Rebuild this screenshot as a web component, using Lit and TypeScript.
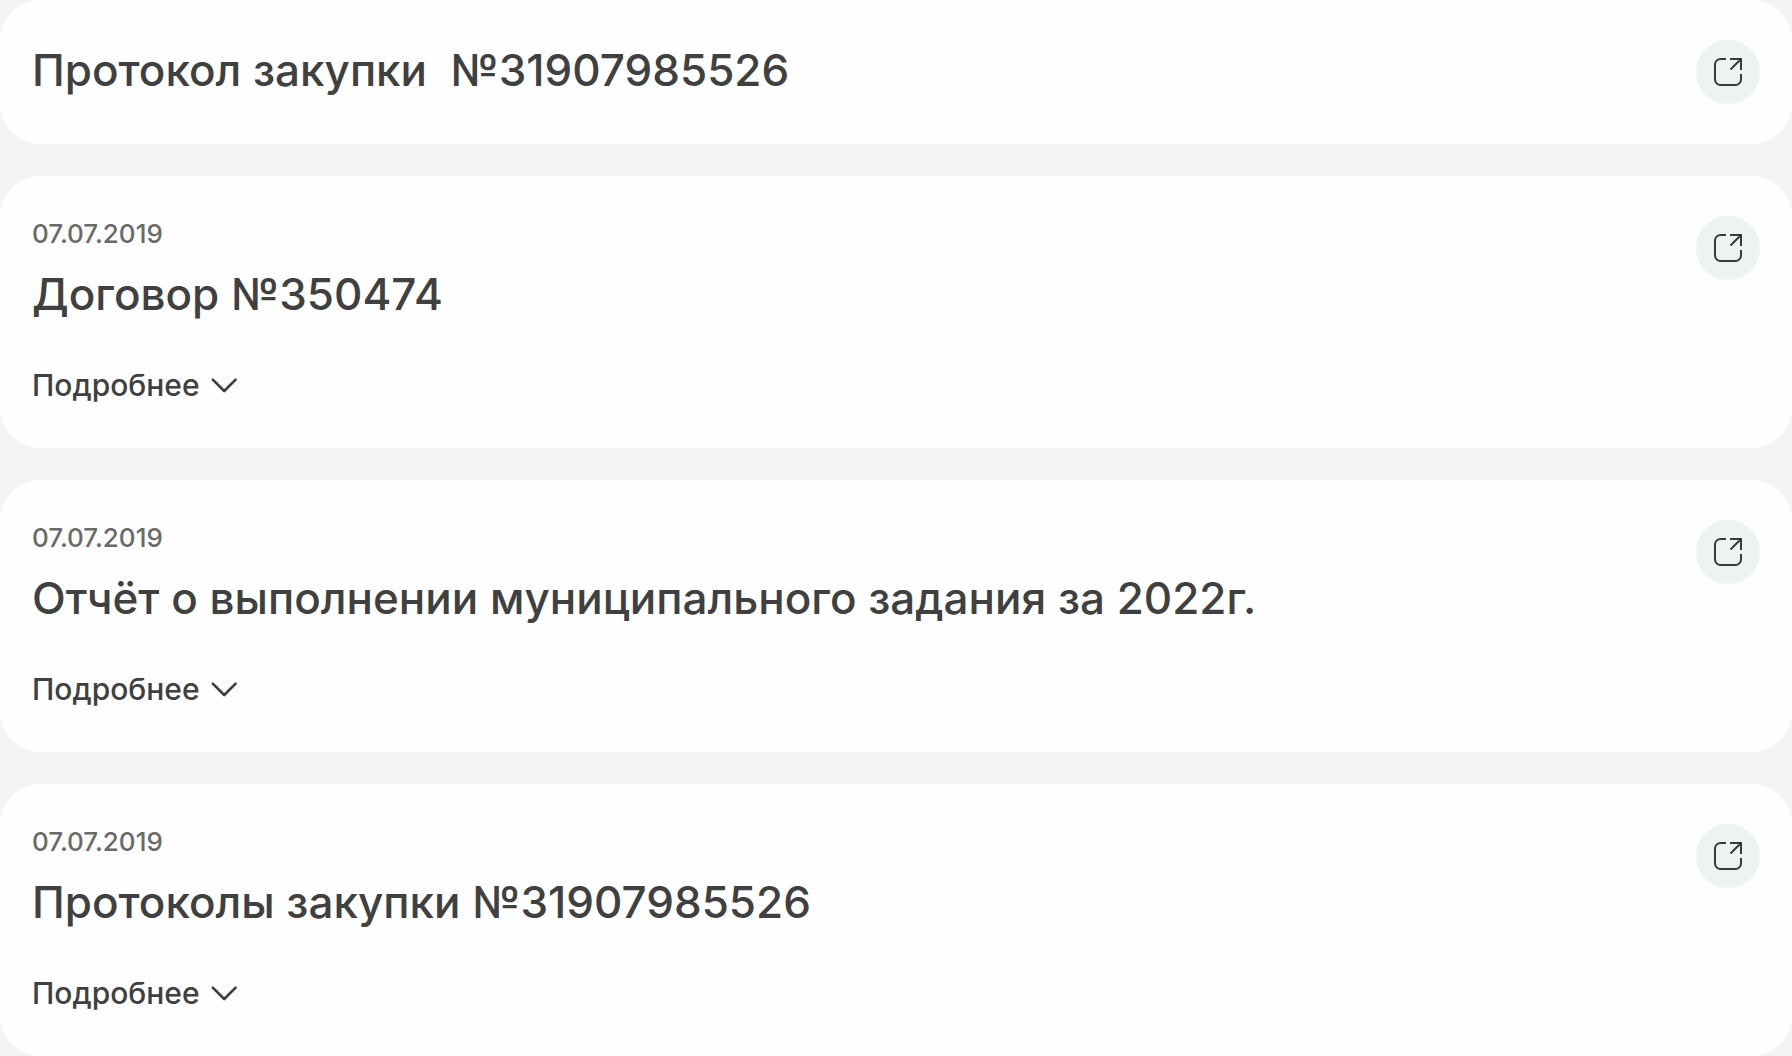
import { LitElement, css, html, nothing } from "lit";
import { customElement, property, state } from "lit/decorators.js";

interface DocumentEntry {
  title: string;
  date?: string;
}

const documents: DocumentEntry[] = [
  { title: "Протокол закупки  №31907985526" },
  { title: "Договор №350474", date: "07.07.2019" },
  { title: "Отчёт о выполнении муниципального задания за 2022г.", date: "07.07.2019" },
  { title: "Протоколы закупки №31907985526", date: "07.07.2019" },
];

@customElement("document-card")
export class DocumentCard extends LitElement {
  @property() heading = "";
  @property() date = "";
  @state() private expanded = false;

  static styles = css`
    :host {
      display: block;
    }
    .card {
      display: flex;
      justify-content: space-between;
      align-items: flex-start;
      gap: 32px;
      padding: 40px 32px;
      border-radius: 40px;
      background: #fefefe;
      color: #404040;
    }
    .body {
      display: flex;
      flex-direction: column;
      align-items: flex-start;
      min-width: 0;
    }
    .date {
      margin-bottom: 12px;
      color: #6a6a6a;
      font-size: 26px;
      font-weight: 500;
      line-height: 36px;
    }
    .title {
      margin: 0;
      font-size: 44px;
      font-weight: 500;
      line-height: 60px;
      white-space: pre-wrap;
    }
    .more {
      display: flex;
      align-items: center;
      gap: 10px;
      margin-top: 38px;
      padding: 0;
      border: 0;
      background: none;
      color: inherit;
      font: inherit;
      font-size: 30px;
      font-weight: 500;
      line-height: 46px;
      cursor: pointer;
    }
    .more[aria-expanded="true"] .chevron {
      transform: rotate(180deg);
    }
    .chevron {
      width: 28px;
      height: 28px;
    }
    .open {
      display: flex;
      flex: none;
      align-items: center;
      justify-content: center;
      width: 64px;
      height: 64px;
      border-radius: 50%;
      background: #edf3ef;
      color: #3b3b39;
    }
    .open-icon {
      width: 28px;
      height: 28px;
    }
  `;

  private toggle() {
    this.expanded = !this.expanded;
  }

  render() {
    return html`
      <article class="card">
        <div class="body">
          ${this.date ? html`<time class="date">${this.date}</time>` : nothing}
          <h2 class="title">${this.heading}</h2>
          ${this.date
            ? html`<button
                class="more"
                type="button"
                aria-expanded=${this.expanded ? "true" : "false"}
                @click=${this.toggle}
              >
                Подробнее
                <svg class="chevron" viewBox="0 0 28 28" fill="none" aria-hidden="true">
                  <path
                    d="M2.8 8.6 14.2 20 25.6 8.6"
                    stroke="currentColor"
                    stroke-width="2.7"
                    stroke-linecap="round"
                    stroke-linejoin="round"
                  />
                </svg>
              </button>`
            : nothing}
        </div>
        <a class="open" href="#" aria-label=${this.heading}>
          <svg class="open-icon" viewBox="0 0 28 28" fill="none" aria-hidden="true">
            <path
              d="M12 1H6.5a5.5 5.5 0 0 0-5.500 5.500v15a5.500 5.500 0 0 0 5.500 5.500h15a5.500 5.500 0 0 0 5.500-5.500v-5.500M16 1h11v11M27 1 16.500 11.500"
              stroke="currentColor"
              stroke-width="2"
            />
          </svg>
        </a>
      </article>
    `;
  }
}

@customElement("app-root")
export class AppRoot extends LitElement {
  static styles = css`
    :host {
      display: block;
      min-height: 100vh;
      background: #f4f4f4;
      font-family: Inter, "Liberation Sans", sans-serif;
    }
    .list {
      display: flex;
      flex-direction: column;
      gap: 32px;
    }
  `;

  render() {
    return html`
      <main class="list">
        ${documents.map(
          (item) => html`<document-card .heading=${item.title} .date=${item.date ?? ""}></document-card>`,
        )}
      </main>
    `;
  }
}
